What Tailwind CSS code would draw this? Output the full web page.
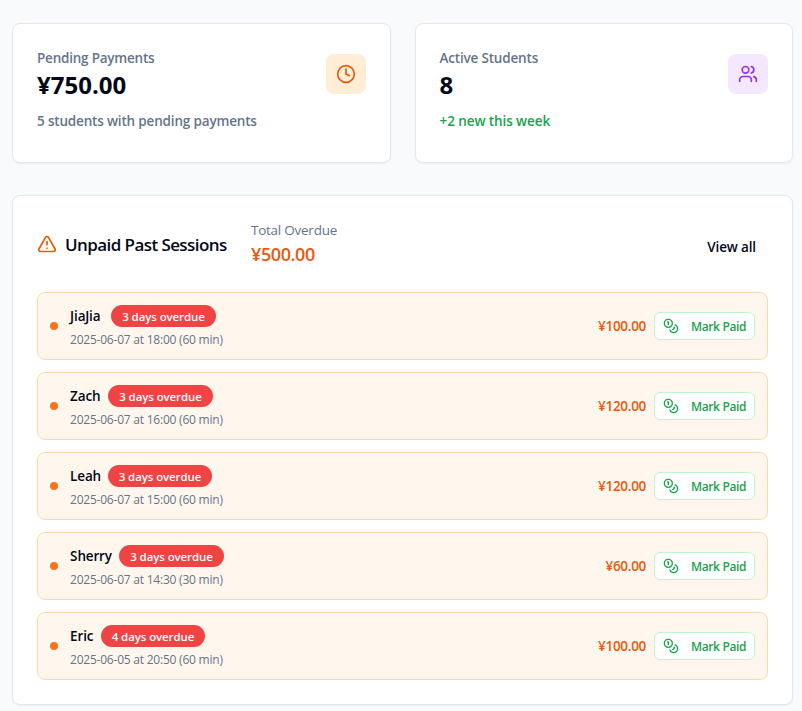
<!DOCTYPE html>
<html lang="en">
<head>
<meta charset="utf-8">
<title>Dashboard</title>
<script src="https://cdn.jsdelivr.net/npm/@tailwindcss/browser@4"></script>
</head>
<body class="bg-[#f8fafc] font-['Open_Sans','Noto_Sans',sans-serif] text-[#020817] h-[711px] overflow-hidden">
<main class="pt-[23px] pl-3 pr-[9px]">
  <section class="grid grid-cols-2 gap-6">
    <div class="h-[140px] rounded-lg border border-[#e2e8f0] bg-white p-6 shadow-[0_1px_2px_0_rgba(0,0,0,0.05)] flex justify-between">
      <div class="whitespace-nowrap">
        <p class="text-[13.5px] leading-5 font-semibold text-[#64748b] tracking-[-0.22px]">Pending Payments</p>
        <p class="text-2xl leading-8 font-bold tracking-[0px] mt-[1px]">¥750.00</p>
        <p class="mt-[10px] text-[13.5px] leading-5 font-semibold text-[#64748b] tracking-[-0.17px]">5 students with pending payments</p>
      </div>
      <div class="mt-[6px] size-10 shrink-0 rounded-lg bg-[#ffedd5] text-[#ea580c] flex items-center justify-center">
        <svg class="size-5" viewBox="0 0 24 24" fill="none" stroke="currentColor" stroke-width="2" stroke-linecap="round" stroke-linejoin="round"><circle cx="12" cy="12" r="10"/><path d="M12 6v6l4 2"/></svg>
      </div>
    </div>
    <div class="h-[140px] rounded-lg border border-[#e2e8f0] bg-white p-6 shadow-[0_1px_2px_0_rgba(0,0,0,0.05)] flex justify-between">
      <div class="whitespace-nowrap">
        <p class="text-[13.5px] leading-5 font-semibold text-[#64748b] tracking-[-0.18px]">Active Students</p>
        <p class="text-2xl leading-8 font-bold mt-[1px]">8</p>
        <p class="mt-[10px] text-[13.5px] leading-5 font-semibold text-[#16a34a] tracking-[-0.08px]">+2 new this week</p>
      </div>
      <div class="mt-[6px] size-10 shrink-0 rounded-lg bg-[#f3e8ff] text-[#9333ea] flex items-center justify-center">
        <svg class="size-5" viewBox="0 0 24 24" fill="none" stroke="currentColor" stroke-width="2" stroke-linecap="round" stroke-linejoin="round"><path d="M16 21v-2a4 4 0 0 0-4-4H6a4 4 0 0 0-4 4v2"/><circle cx="9" cy="7" r="4"/><path d="M22 21v-2a4 4 0 0 0-3-3.87"/><path d="M16 3.13a4 4 0 0 1 0 7.75"/></svg>
      </div>
    </div>
  </section>

  <section class="mt-8 h-[510px] rounded-lg border border-[#e2e8f0] bg-white p-6 shadow-[0_1px_2px_0_rgba(0,0,0,0.05)]">
    <header class="flex h-12 items-center whitespace-nowrap">
      <svg class="size-5 text-[#ea580c]" viewBox="0 0 24 24" fill="none" stroke="currentColor" stroke-width="2" stroke-linecap="round" stroke-linejoin="round"><path d="m21.73 18-8-14a2 2 0 0 0-3.48 0l-8 14A2 2 0 0 0 4 21h16a2 2 0 0 0 1.73-3"/><path d="M12 9v4"/><path d="M12 17h.01"/></svg>
      <h2 class="ml-2 mt-0.5 w-[162px] text-[17px] leading-7 font-semibold tracking-[-0.58px]">Unpaid Past Sessions</h2>
      <div class="ml-6">
        <p class="text-[13.5px] leading-5 text-[#64748b] tracking-[-0.25px]">Total Overdue</p>
        <p class="text-lg leading-7 font-semibold text-[#ea580c] tracking-[-0.4px]">¥500.00</p>
      </div>
      <a class="ml-auto mt-1.5 mr-3 text-[13.5px] leading-5 font-semibold tracking-[-0.15px]">View all</a>
    </header>
    <ul id="sessions" class="mt-6 flex flex-col gap-3"></ul>
  </section>
</main>

<template id="row">
  <li class="flex h-[68px] items-center rounded-lg border border-[#fed7aa] bg-[#fff7ed] px-3 whitespace-nowrap">
    <span class="size-2 rounded-full bg-[#f97316]"></span>
    <div class="ml-3">
      <div class="flex h-[22px] items-center gap-2">
        <span data-f="name" class="text-[13.5px] leading-5 font-semibold tracking-[-0.2px] first-letter:tracking-normal"></span>
        <span data-f="badge" class="flex h-[22px] items-center justify-center rounded-full bg-[#ef4444] pt-px text-[11.5px] leading-4 font-semibold text-[#f8fafc] tracking-[-0.1px]"></span>
      </div>
      <p data-f="time" class="mt-[5px] -mb-px text-xs leading-4 text-[#64748b] tracking-[-0.22px]"></p>
    </div>
    <span data-f="price" class="ml-auto text-[13.5px] leading-5 font-semibold text-[#ea580c] tracking-[-0.3px]"></span>
    <button class="ml-2 flex h-7 w-[101px] items-center rounded-md border border-[#bbf7d0] bg-white pl-2 text-[#16a34a]">
      <svg class="size-4" viewBox="0 0 24 24" fill="none" stroke="currentColor" stroke-width="2" stroke-linecap="round" stroke-linejoin="round"><circle cx="8" cy="8" r="6"/><path d="M18.09 10.37A6 6 0 1 1 10.34 18"/><path d="M7 6h1v4"/><path d="m16.71 13.88.7.71-2.82 2.82"/></svg>
      <span class="ml-3 mt-px text-xs leading-4 font-semibold tracking-[-0.36px]">Mark Paid</span>
    </button>
  </li>
</template>
<script>
const sessions = [
  ["JiaJia", 33, 105, "3 days overdue", "2025-06-07 at 18:00 (60 min)", "¥100.00"],
  ["Zach", 30, 105, "3 days overdue", "2025-06-07 at 16:00 (60 min)", "¥120.00"],
  ["Leah", 30, 104, "3 days overdue", "2025-06-07 at 15:00 (60 min)", "¥120.00"],
  ["Sherry", 41, 105, "3 days overdue", "2025-06-07 at 14:30 (30 min)", "¥60.00"],
  ["Eric", 23, 104, "4 days overdue", "2025-06-05 at 20:50 (60 min)", "¥100.00"]
];
const list = document.getElementById("sessions");
for (const [name, nameWidth, badgeWidth, badge, time, price] of sessions) {
  const row = document.getElementById("row").content.cloneNode(true);
  const field = f => row.querySelector(`[data-f=${f}]`);
  field("name").textContent = name;
  field("name").style.width = nameWidth + "px";
  field("badge").textContent = badge;
  field("badge").style.width = badgeWidth + "px";
  field("time").textContent = time;
  field("price").textContent = price;
  list.append(row);
}
</script>
</body>
</html>
